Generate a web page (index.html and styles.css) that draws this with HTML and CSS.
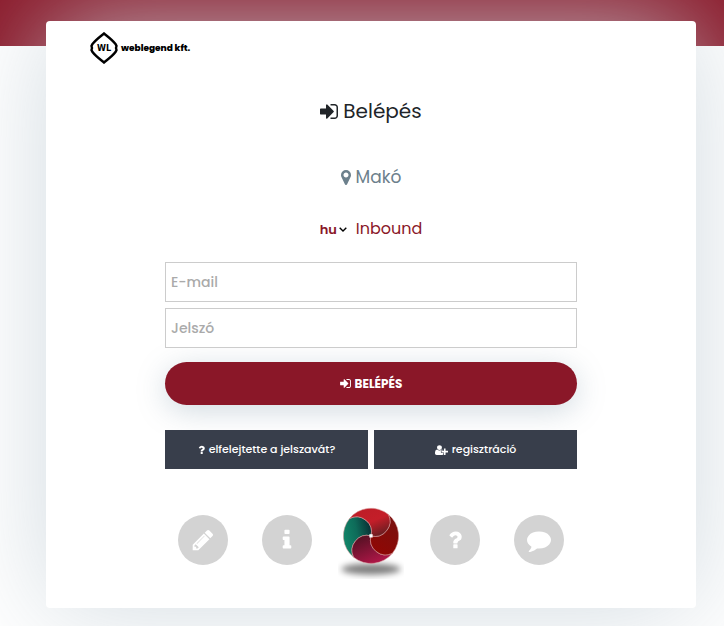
FILE: index.html
```html
<!DOCTYPE html>
<html lang="hu">
<head>
    <meta charset="UTF-8">
    <meta name="viewport" content="width=device-width, initial-scale=1.0">
    <title>Belépés</title>
    <link rel="stylesheet" href="styles.css">
</head>
<body>
    <!-- Shared icons -->
    <svg class="sprite" aria-hidden="true">
        <symbol id="icon-sign-in" viewBox="128 256 1536 1280"><path d="M1312 896q0 26-19 45l-544 544q-19 19-45 19t-45-19-19-45v-288h-448q-26 0-45-19t-19-45v-384q0-26 19-45t45-19h448v-288q0-26 19-45t45-19 45 19l544 544q19 19 19 45zm352-352v704q0 119-84.5 203.5t-203.5 84.5h-320q-13 0-22.5-9.5t-9.5-22.5q0-4-1-20t-.5-26.5 3-23.5 10-19.5 20.5-6.5h320q66 0 113-47t47-113v-704q0-66-47-113t-113-47h-312l-11.5-1-11.5-3-8-5.5-7-9-2-13.5q0-4-1-20t-.5-26.5 3-23.5 10-19.5 20.5-6.5h320q119 0 203.5 84.5t84.5 203.5z"/></symbol>
        <symbol id="icon-question" viewBox="384 128 1024 1408"><path d="M1088 1256v240q0 16-12 28t-28 12h-240q-16 0-28-12t-12-28v-240q0-16 12-28t28-12h240q16 0 28 12t12 28zm316-600q0 54-15.5 101t-35 76.5-55 59.5-57.5 43.5-61 35.5q-41 23-68.5 65t-27.5 67q0 17-12 32.5t-28 15.5h-240q-15 0-25.5-18.5t-10.5-37.5v-45q0-83 65-156.5t143-108.5q59-27 84-56t25-76q0-42-46.5-74t-107.5-32q-65 0-108 29-35 25-107 115-13 16-31 16-12 0-25-8l-164-125q-13-10-15.5-25t5.5-28q160-266 464-266 80 0 161 31t146 83 106 127.5 41 158.5z"/></symbol>
    </svg>

    <header class="top-bar"></header>

    <main class="page">
        <section class="card">
            <a class="brand" href="#">
                <svg class="brand-mark" viewBox="0 0 28 32" aria-hidden="true">
                    <path d="M14 1.500C17 4 22 7.500 25.500 12L26.500 14L26 16L26.500 18L25.500 20C22 24.500 17 28 14 30.500C11 28 6 24.500 2.500 20L1.500 18L2 16L1.500 14L2.500 12C6 7.500 11 4 14 1.500Z" fill="none" stroke="#000" stroke-width="2.400"/>
                    <text x="14" y="19" class="brand-initials">WL</text>
                </svg>
                <span class="brand-name">weblegend kft.</span>
            </a>

            <form class="login">
                <h1 class="title">
                    <svg class="icon title-icon" aria-hidden="true"><use href="#icon-sign-in"/></svg>
                    Belépés
                </h1>
                <p class="location">
                    <svg class="icon location-icon" viewBox="384 128 1024 1536" aria-hidden="true"><path d="M1152 640q0-106-75-181t-181-75-181 75-75 181 75 181 181 75 181-75 75-181zm256 0q0 109-33 179l-364 774q-16 33-47.500 52t-67.500 19-67.500-19-46.500-52l-365-774q-33-70-33-179 0-212 150-362t362-150 362 150 150 362z"/></svg>
                    Makó
                </p>
                <div class="options">
                    <span class="lang">
                        <select class="lang-select" aria-label="Nyelv">
                            <option>hu</option>
                        </select>
                        <svg class="lang-arrow" viewBox="0 0 8 5" aria-hidden="true"><path d="M.7.7L4 4L7.300.7" fill="none" stroke="#000" stroke-width="1.400"/></svg>
                    </span>
                    <a class="inbound" href="#">Inbound</a>
                </div>

                <div class="fields">
                    <input class="field" type="email" placeholder="E-mail" aria-label="E-mail">
                    <input class="field" type="password" placeholder="Jelszó" aria-label="Jelszó">
                </div>

                <button class="submit" type="submit">
                    <svg class="icon submit-icon" aria-hidden="true"><use href="#icon-sign-in"/></svg>
                    BELÉPÉS
                </button>

                <div class="secondary">
                    <button class="secondary-btn" type="button">
                        <svg class="icon question-icon" aria-hidden="true"><use href="#icon-question"/></svg>
                        elfelejtette a jelszavát?
                    </button>
                    <button class="secondary-btn" type="button">
                        <svg class="icon user-icon" viewBox="0 128 2048 1536" aria-hidden="true"><path d="M704 896q-159 0-271.500-112.500t-112.500-271.500 112.500-271.500 271.500-112.500 271.500 112.500 112.500 271.500-112.500 271.500-271.500 112.500zm960 128h352q13 0 22.500 9.500t9.500 22.500v192q0 13-9.500 22.500t-22.500 9.500h-352v352q0 13-9.500 22.500t-22.500 9.500h-192q-13 0-22.500-9.500t-9.500-22.500v-352h-352q-13 0-22.500-9.500t-9.500-22.500v-192q0-13 9.500-22.500t22.500-9.500h352v-352q0-13 9.500-22.500t22.500-9.500h192q13 0 22.500 9.500t9.500 22.500v352zm-736 224q0 52 38 90t90 38h256v238q-68 50-171 50h-874q-121 0-194-69t-73-190q0-53 3.500-103.500t14-109 26.500-108.500 43-97.500 62-81 85.500-53.500 111.500-20q19 0 39 17 79 61 154.500 91.500t164.500 30.500 164.500-30.500 154.500-91.500q20-17 39-17 132 0 217 96h-223q-52 0-90 38t-38 90v192z"/></svg>
                        regisztráció
                    </button>
                </div>
            </form>

            <nav class="links">
                <a class="round" href="#" aria-label="Szerkesztés">
                    <svg class="icon round-icon" viewBox="0 0 1792 1792"><path d="M491 1536l91-91-235-235-91 91v107h128v128h107zm523-928q0-22-22-22-10 0-17 7l-542 542q-7 7-7 17 0 22 22 22 10 0 17-7l542-542q7-7 7-17zm-54-192l416 416-832 832h-416v-416zm683 96q0 53-37 90l-166 166-416-416 166-165q36-38 90-38 53 0 91 38l235 234q37 39 37 91z"/></svg>
                </a>
                <a class="round" href="#" aria-label="Információ">
                    <svg class="icon round-icon" viewBox="0 0 1792 1792"><path d="M1216 1344v128q0 26-19 45t-45 19h-512q-26 0-45-19t-19-45v-128q0-26 19-45t45-19h64v-384h-64q-26 0-45-19t-19-45v-128q0-26 19-45t45-19h384q26 0 45 19t19 45v576h64q26 0 45 19t19 45zm-128-1152v192q0 26-19 45t-45 19h-256q-26 0-45-19t-19-45v-192q0-26 19-45t45-19h256q26 0 45 19t19 45z"/></svg>
                </a>
                <a class="swirl" href="#" aria-label="Főoldal">
                    <svg class="swirl-image" viewBox="-120 -104 240 260">
                        <defs>
                            <linearGradient id="green" x1="0" y1="0.600" x2="1" y2="0.300"><stop offset="0" stop-color="#12876a"/><stop offset="0.500" stop-color="#0e6b59"/><stop offset="1" stop-color="#092f34"/></linearGradient>
                            <linearGradient id="red" x1="0.200" y1="0" x2="0.800" y2="1"><stop offset="0" stop-color="#bd1d27"/><stop offset="0.500" stop-color="#c41e29"/><stop offset="1" stop-color="#601d20"/></linearGradient>
                            <linearGradient id="dark" x1="0.800" y1="0" x2="0.300" y2="1"><stop offset="0" stop-color="#78110f"/><stop offset="1" stop-color="#900704"/></linearGradient>
                            <linearGradient id="wine" x1="0.100" y1="0" x2="0.700" y2="1"><stop offset="0" stop-color="#4d1020"/><stop offset="1" stop-color="#b5174a"/></linearGradient>
                            <filter id="soft" x="-30%" y="-150%" width="160%" height="400%"><feGaussianBlur stdDeviation="12"/></filter>
                        </defs>
                        <ellipse cx="0" cy="121" rx="108" ry="20" fill="#000" opacity="0.500" filter="url(#soft)"/>
                        <g stroke="#d8a0a0" stroke-width="2">
                            <path fill="url(#green)" d="M0 0A55 55 0 0 0 -78 -63A100 100 0 0 0 -63 78A55 55 0 0 1 0 0Z"/>
                            <path fill="url(#wine)" d="M0 0A55 55 0 0 0 -63 78A100 100 0 0 0 78 63A55 55 0 0 1 0 0Z"/>
                            <path fill="url(#dark)" d="M0 0A55 55 0 0 0 78 63A100 100 0 0 0 63 -78A55 55 0 0 1 0 0Z"/>
                            <path fill="url(#red)" d="M0 0A55 55 0 0 0 63 -78A100 100 0 0 0 -78 -63A55 55 0 0 1 0 0Z"/>
                        </g>
                        <rect x="-6" y="-6" width="12" height="12" fill="#fff"/>
                    </svg>
                </a>
                <a class="round" href="#" aria-label="Súgó">
                    <svg class="icon round-icon" viewBox="0 0 1792 1792"><use href="#icon-question" x="384" y="128" width="1024" height="1408"/></svg>
                </a>
                <a class="round" href="#" aria-label="Üzenet">
                    <svg class="icon round-icon" viewBox="0 0 1792 1792"><path d="M1792 896q0 174-120 321.500t-326 233-450 85.500q-70 0-145-8-198 175-460 242-49 14-114 22-17 2-30.500-9t-17.500-29v-1q-3-4-.5-12t2-10 4.500-9.500l6-9 7-8.500 8-9q7-8 31-34.500t34.500-38 31-39.500 32.500-51 27-59 26-76q-157-89-247.500-220t-90.500-281q0-174 120-321.500t326-233 450-85.500 450 85.500 326 233 120 321.500z"/></svg>
                </a>
            </nav>
        </section>
    </main>
</body>
</html>
```
FILE: styles.css
```css
* {
    box-sizing: border-box;
}
body {
    display: grid;
    margin: 0;
    min-height: 100vh;
    grid-template-rows: 46px 1fr;
    background-color: #fff;
    color: #212529;
    font-family: Poppins, Inter, "Open Sans", sans-serif;
    font-feature-settings: "cv11";
}
button, input, select {
    font-family: inherit;
    font-feature-settings: inherit;
}
a {
    text-decoration: none;
}
.sprite {
    display: none;
}
.icon {
    flex: none;
    fill: currentColor;
}

/* Page frame */
.top-bar {
    grid-area: 1 / 1;
    background-color: #8a1728;
}
.page {
    grid-area: 1 / 1 / 3 / 2;
    padding: 21px 28px 18px 46px;
    overflow: hidden;
}
.card {
    padding: 11px 44px 29px;
    border-radius: 4px;
    background-color: #fff;
    box-shadow: 0 0 110px rgba(201, 212, 219, 0.85);
}
.brand {
    display: flex;
    align-items: center;
    gap: 3px;
    color: #000;
}
.brand-mark {
    width: 28px;
    height: 32px;
}
.brand-initials {
    font-family: "DejaVu Sans Condensed", "DejaVu Sans", sans-serif;
    font-size: 9px;
    font-weight: 700;
    text-anchor: middle;
}
.brand-name {
    font-size: 9px;
    font-weight: 800;
    line-height: 16px;
}

/* Login form */
.login {
    max-width: 412px;
    margin: 0 auto;
}
.title, .location, .options {
    display: flex;
    align-items: center;
    justify-content: center;
    gap: 5px;
}
.title {
    margin: 32px 0 36px;
    font-size: 20px;
    font-weight: 400;
    line-height: 30px;
}
.title-icon {
    width: 18px;
    height: 15px;
}
.location {
    margin: 0 0 25px;
    color: #6c808c;
    font-size: 17px;
    line-height: 30px;
}
.location-icon {
    width: 10px;
    height: 15px;
}
.options {
    gap: 9px;
    margin-bottom: 21px;
    line-height: 24px;
}
.lang {
    display: flex;
    align-items: center;
    gap: 1px;
}
.lang-select {
    padding: 0;
    border: 0;
    background: none;
    color: #8a1728;
    font-size: 13px;
    font-weight: 600;
    appearance: none;
}
.lang-arrow {
    width: 8px;
    height: 5px;
}
.inbound {
    color: #8a1728;
    font-size: 16px;
}
.fields {
    display: grid;
    gap: 6px;
    margin-bottom: 14px;
}
.field {
    width: 100%;
    height: 40px;
    padding: 0 5px;
    border: 1px solid #ccc;
    background-color: #fff;
    font-size: 14px;
    font-weight: 500;
}
.field::placeholder {
    color: #aaa;
}
.submit, .secondary-btn {
    display: flex;
    align-items: center;
    justify-content: center;
    gap: 4px;
    border: 0;
    color: #fff;
    font-size: 11px;
    cursor: pointer;
}
.submit {
    width: 100%;
    height: 43px;
    margin-bottom: 25px;
    border-radius: 22px;
    background-color: #8a1728;
    box-shadow: 0 6px 30px rgba(201, 212, 219, 0.85);
    font-size: 12px;
    font-weight: 700;
}
.submit-icon {
    width: 11px;
    height: 9px;
}
.secondary {
    display: grid;
    grid-template-columns: 1fr 1fr;
    gap: 6px;
}
.secondary-btn {
    height: 39px;
    background-color: #383e4b;
    font-weight: 500;
}
.question-icon {
    width: 7px;
    height: 9px;
}
.user-icon {
    width: 13px;
    height: 10px;
}

/* Round links */
.links {
    display: flex;
    align-items: flex-start;
    justify-content: center;
    gap: 34px;
    margin-top: 38px;
}
.round {
    display: flex;
    align-items: center;
    justify-content: center;
    width: 50px;
    height: 50px;
    margin-top: 8px;
    border-radius: 50%;
    background-color: #d3d3d3;
    color: #fff;
}
.round-icon {
    width: 24px;
    height: 24px;
}
.swirl {
    margin: 0 -8px;
}
.swirl-image {
    display: block;
    width: 66px;
    height: 72px;
}
```
